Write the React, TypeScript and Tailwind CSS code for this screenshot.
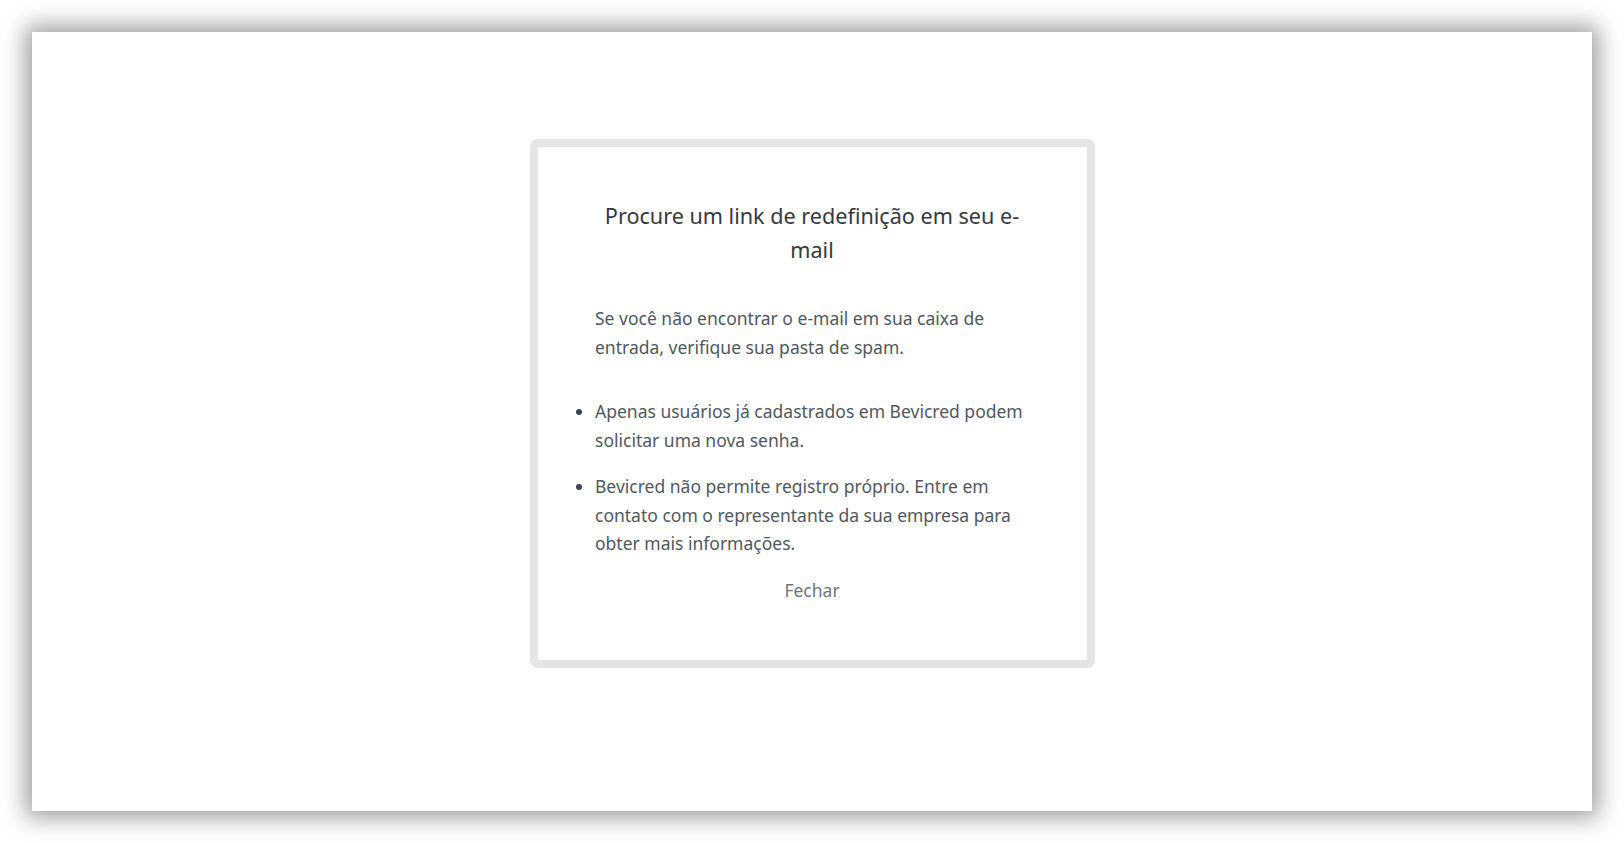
export default function App() {
  const font = { fontFamily: '"Noto Sans", "Open Sans", sans-serif' };
  return (
    <div className="min-h-screen w-full bg-white p-8" style={font}>
      <div className="flex h-[779px] w-full justify-center bg-white pt-[107px] shadow-[0_0_22px_6px_rgba(0,0,0,0.4)]">
        <div className="h-[529px] w-[565px] rounded-lg border-8 border-[#e5e5e5] bg-white">
          <div className="mx-auto w-[434px] pt-[52px]">
            <h1 className="text-center text-[21.6px] leading-[34px] font-normal text-[#343a40]">
              Procure um link de redefinição em seu e-mail
            </h1>
            <p className="mt-[37px] text-[17.5px] leading-[28.5px] text-[#4f5861]">
              Se você não encontrar o e-mail em sua caixa de entrada, verifique sua pasta de spam.
            </p>
            <ul className="mt-[36px] space-y-[18px] text-[17.5px] leading-[28.5px] text-[#4f5861]">
              <li className="relative">
                <span className="absolute left-[-19px] top-[12px] h-[6px] w-[6px] rounded-full bg-[#3c444c]" />
                Apenas usuários já cadastrados em Bevicred podem solicitar uma nova senha.
              </li>
              <li className="relative">
                <span className="absolute left-[-19px] top-[12px] h-[6px] w-[6px] rounded-full bg-[#3c444c]" />
                Bevicred não permite registro próprio. Entre em contato com o representante da sua empresa para obter mais informações.
              </li>
            </ul>
            <div className="mt-[18px] text-center">
              <button className="text-[17.5px] leading-[28.5px] text-[#6c757d]">Fechar</button>
            </div>
          </div>
        </div>
      </div>
    </div>
  );
}
